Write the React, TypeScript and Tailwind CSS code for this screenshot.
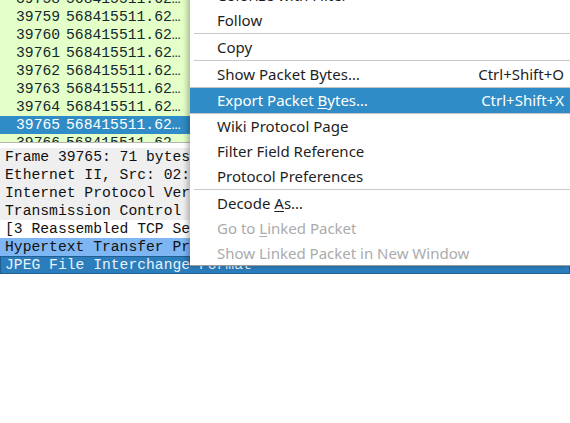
import React from "react";

const mono = { fontFamily: '"Liberation Mono", "DejaVu Sans Mono", monospace' };
const sans = { fontFamily: '"Noto Sans", "Open Sans", sans-serif' };

const rows = [39758, 39759, 39760, 39761, 39762, 39763, 39764, 39765, 39766];

function Sep() {
  return (
    <div className="h-[2px] pl-[4px]">
      <div className="h-px bg-[#c9c9c9]" />
    </div>
  );
}

function Item({
  children,
  shortcut,
  disabled,
}: {
  children: React.ReactNode;
  shortcut?: string;
  disabled?: boolean;
}) {
  return (
    <div
      className={
        "h-[25px] flex items-center justify-between pl-[27px] pr-[6px] text-[15px] " +
        (disabled ? "text-[#ababab]" : "text-[#1e1e1e]")
      }
    >
      <span>{children}</span>
      {shortcut && <span>{shortcut}</span>}
    </div>
  );
}

export default function App() {
  return (
    <div className="relative w-[570px] h-[423px] bg-white overflow-hidden">
      {/* packet list */}
      <div className="h-[142px] overflow-hidden" style={mono}>
        <div className="-mt-[10px]">
          {rows.map((n) => {
            const sel = n === 39765;
            return (
              <div
                key={n}
                className={
                  "h-[18px] flex items-center text-[14.7px] leading-[18px] whitespace-nowrap " +
                  (sel ? "bg-[#308cc6] text-white" : "bg-[#e4ffc7] text-[#12272e]")
                }
              >
                <span className="w-[66px] pl-[16px]">{n}</span>
                <span>568415511.62…</span>
              </div>
            );
          })}
        </div>
      </div>
      <div className="h-px bg-[#b4b4b4]" />
      {/* details */}
      <div className="pt-[5px] text-[14.7px] leading-[18px]" style={mono}>
        {[
          "Frame 39765: 71 bytes on wire",
          "Ethernet II, Src: 02:42:ac:11:00:02",
          "Internet Protocol Version 4",
          "Transmission Control Protocol",
        ].map((t) => (
          <div key={t} className="h-[18px] bg-[#efefef] pl-[5px] text-[#111] whitespace-nowrap overflow-hidden">
            {t}
          </div>
        ))}
        <div className="h-[18px] bg-white pl-[5px] text-[#111] whitespace-nowrap overflow-hidden">
          [3 Reassembled TCP Segments (1234 bytes)]
        </div>
        <div className="h-[18px] bg-[#7db6f2] pl-[5px] text-[#111] whitespace-nowrap overflow-hidden">
          Hypertext Transfer Protocol
        </div>
        <div className="h-[18px] bg-[#2b7dbb] border border-[#1f5f91] pl-[4px] leading-[16px] text-[#e8f2fa] whitespace-nowrap overflow-hidden">
          JPEG File Interchange Format
        </div>
      </div>

      {/* context menu */}
      <div
        className="absolute left-[190px] top-[-17px] w-[380px] bg-white border-b border-[#9a9a9a] shadow-[-3px_0_5px_rgba(0,0,0,0.25)]"
        style={sans}
      >
        <Item>Colorize with Filter</Item>
        <Item>Follow</Item>
        <Sep />
        <Item>Copy</Item>
        <Sep />
        <Item shortcut="Ctrl+Shift+O">Show Packet Bytes…</Item>
        <div className="h-[27px] border-y border-[#c4c4c4]">
          <div className="h-[25px] flex items-center justify-between pl-[27px] pr-[6px] text-[15px] bg-[#308cc6] text-white">
            <span>
              Export Packet <u className="underline-offset-2">B</u>ytes…
            </span>
            <span>Ctrl+Shift+X</span>
          </div>
        </div>
        <Item>Wiki Protocol Page</Item>
        <Item>Filter Field Reference</Item>
        <Item>Protocol Preferences</Item>
        <Sep />
        <Item>
          Decode <u className="underline-offset-2">A</u>s…
        </Item>
        <Item disabled>
          Go to <u className="underline-offset-2">L</u>inked Packet
        </Item>
        <div className="h-[24px] flex items-center pl-[27px] text-[15px] text-[#ababab]">
          <span>Show Linked Packet in New Window</span>
        </div>
      </div>
    </div>
  );
}
